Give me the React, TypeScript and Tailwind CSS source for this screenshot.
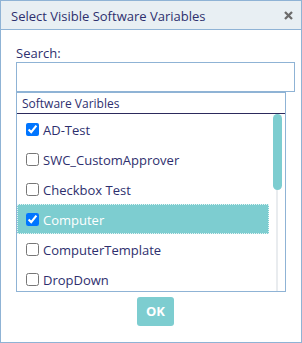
import React from "react";

const rows = [
  { label: "AD-Test", checked: true },
  { label: "SWC_CustomApprover", checked: false },
  { label: "Checkbox Test", checked: false },
  { label: "Computer", checked: true, selected: true },
  { label: "ComputerTemplate", checked: false },
  { label: "DropDown", checked: false },
];

export default function App() {
  return (
    <div
      className="w-[302px] h-[343px] border border-[#8fb3d5] bg-white flex flex-col overflow-hidden text-[#2e2f6e]"
      style={{ fontFamily: '"Open Sans", "Noto Sans", sans-serif' }}
    >
      <div className="h-[29px] shrink-0 bg-[#e8eff3] border-b border-[#8fb3d5] flex items-center justify-between pl-[10px] pr-[8px]">
        <span className="text-[13px] leading-[18px] pt-[2px]">Select Visible Software Variables</span>
        <svg width="9" height="9" viewBox="0 0 9 9" className="mt-[1px]">
          <path d="M1 1 L8 8 M8 1 L1 8" stroke="#6b6b6b" strokeWidth="2.3" strokeLinecap="butt" />
        </svg>
      </div>
      <div className="flex flex-col pl-[15px] pr-[6px] pt-[15px]">
        <div className="text-[13px] leading-[17px] h-[17px]">Search:</div>
        <input
          type="text"
          className="w-[279px] h-[30px] border border-[#8fb3d5] outline-none px-1 text-[13px]"
        />
        <div className="w-[270px] h-[200px] border border-[#8fb3d5] flex flex-col">
          <div className="h-[21px] shrink-0 border-b border-[#2c2a5c] pl-[5px] pt-[1px] text-[12px] leading-[20px]">
            Software Varibles
          </div>
          <div className="flex flex-1 overflow-hidden">
            <div className="w-[252px] flex flex-col">
              {rows.map((r) => (
                <div
                  key={r.label}
                  className={
                    "h-[30px] shrink-0 flex items-center pl-[9px] gap-[4px] text-[13px] " +
                    (r.selected
                      ? "bg-[#7dcdd0] text-white outline-1 outline-dotted outline-white/80 -outline-offset-1"
                      : "")
                  }
                >
                  <input
                    type="checkbox"
                    defaultChecked={r.checked}
                    className="m-0 w-[13px] h-[13px] shrink-0"
                  />
                  <span className="leading-[18px] pt-[1px]">{r.label}</span>
                </div>
              ))}
            </div>
            <div className="w-[16px] relative flex justify-center">
              <div className="w-[2px] h-full bg-[#e9ecef]"></div>
              <div className="absolute top-0 left-[4px] w-[9px] h-[76px] rounded-full bg-[#7dcdd0]"></div>
            </div>
          </div>
        </div>
        <div className="flex justify-center mt-[5px]">
          <button className="w-[37px] h-[29px] rounded-[3px] bg-[#7dcdd0] text-white font-bold text-[13px] leading-none">
            OK
          </button>
        </div>
      </div>
    </div>
  );
}
